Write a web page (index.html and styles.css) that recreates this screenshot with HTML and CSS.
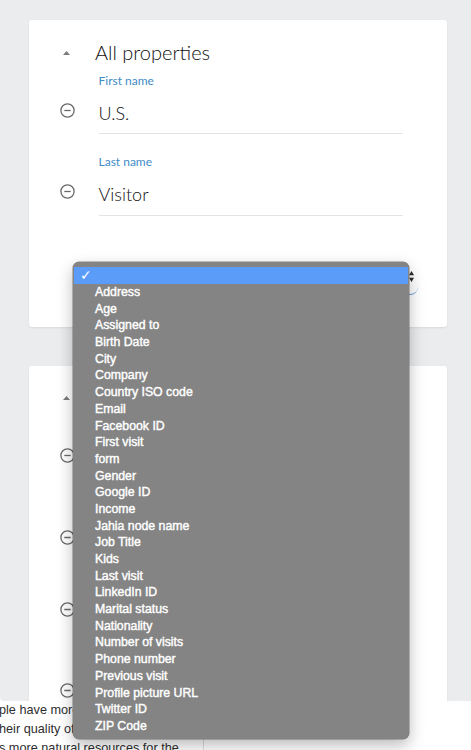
FILE: index.html
```html
<!DOCTYPE html>
<html>
<head>
<meta charset="utf-8">
<title>Profile properties</title>
<link rel="stylesheet" href="styles.css">
</head>
<body>
<div class="app">
  <section class="card card-first">
    <div class="card-head">
      <svg class="caret" viewBox="0 0 7 4"><path d="M0 4 L3.5 0 L7 4 Z"/></svg>
      <h2 class="card-title">All properties</h2>
    </div>
    <div class="field">
      <div class="field-label">First name</div>
      <svg class="remove" viewBox="0 0 15 15"><circle cx="7.5" cy="7.5" r="6.6"/><line x1="4.3" y1="7.5" x2="10.7" y2="7.5"/></svg>
      <div class="field-value">U.S.</div>
    </div>
    <div class="field">
      <div class="field-label">Last name</div>
      <svg class="remove" viewBox="0 0 15 15"><circle cx="7.5" cy="7.5" r="6.6"/><line x1="4.3" y1="7.5" x2="10.7" y2="7.5"/></svg>
      <div class="field-value">Visitor</div>
    </div>
    <div class="select">
      <svg class="stepper" viewBox="0 0 5 11"><path d="M0 4.2 L2.5 0 L5 4.2 Z M0 6.8 L2.5 11 L5 6.8 Z"/></svg>
    </div>
  </section>

  <section class="card card-second">
    <div class="card-head">
      <svg class="caret" viewBox="0 0 7 4"><path d="M0 4 L3.5 0 L7 4 Z"/></svg>
      <h2 class="card-title"></h2>
    </div>
    <div class="field">
      <div class="field-label"></div>
      <svg class="remove" viewBox="0 0 15 15"><circle cx="7.5" cy="7.5" r="6.6"/><line x1="4.3" y1="7.5" x2="10.7" y2="7.5"/></svg>
      <div class="field-value"></div>
    </div>
    <div class="field">
      <div class="field-label"></div>
      <svg class="remove" viewBox="0 0 15 15"><circle cx="7.5" cy="7.5" r="6.6"/><line x1="4.3" y1="7.5" x2="10.7" y2="7.5"/></svg>
      <div class="field-value"></div>
    </div>
    <div class="field field-compact">
      <div class="field-label"></div>
      <svg class="remove" viewBox="0 0 15 15"><circle cx="7.5" cy="7.5" r="6.6"/><line x1="4.3" y1="7.5" x2="10.7" y2="7.5"/></svg>
      <div class="field-value"></div>
    </div>
    <div class="field">
      <div class="field-label"></div>
      <svg class="remove" viewBox="0 0 15 15"><circle cx="7.5" cy="7.5" r="6.6"/><line x1="4.3" y1="7.5" x2="10.7" y2="7.5"/></svg>
      <div class="field-value"></div>
    </div>
  </section>
</div>

<div class="below">
  <div class="text-col">
    <p class="para">ple have more<br>heir quality of<br>s more natural resources for the</p>
  </div>
  <div class="rest"></div>
</div>

<div class="popup">
  <div class="opt selected"><span class="check">✓</span></div>
  <div class="opt">Address</div>
  <div class="opt">Age</div>
  <div class="opt">Assigned to</div>
  <div class="opt">Birth Date</div>
  <div class="opt">City</div>
  <div class="opt">Company</div>
  <div class="opt">Country ISO code</div>
  <div class="opt">Email</div>
  <div class="opt">Facebook ID</div>
  <div class="opt">First visit</div>
  <div class="opt">form</div>
  <div class="opt">Gender</div>
  <div class="opt">Google ID</div>
  <div class="opt">Income</div>
  <div class="opt">Jahia node name</div>
  <div class="opt">Job Title</div>
  <div class="opt">Kids</div>
  <div class="opt">Last visit</div>
  <div class="opt">LinkedIn ID</div>
  <div class="opt">Marital status</div>
  <div class="opt">Nationality</div>
  <div class="opt">Number of visits</div>
  <div class="opt">Phone number</div>
  <div class="opt">Previous visit</div>
  <div class="opt">Profile picture URL</div>
  <div class="opt">Twitter ID</div>
  <div class="opt">ZIP Code</div>
</div>
</body>
</html>
```

FILE: styles.css
```css
html, body {
  margin: 0;
  padding: 0;
}

body {
  background: #ffffff;
  font-family: "Lato", "Noto Sans", sans-serif;
  width: 471px;
  height: 750px;
  overflow: hidden;
  position: relative;
}

.app {
  height: 701px;
  box-sizing: border-box;
  background: #ebecee;
  padding: 20px 24px 0 29px;
  overflow: hidden;
  border-bottom-left-radius: 4px;
}

.card {
  background: #ffffff;
  border-radius: 3px;
  box-shadow: 0 1px 2px rgba(0, 0, 0, 0.08);
  padding: 20px 44px 31.5px 31px;
  box-sizing: border-box;
}

.card + .card {
  margin-top: 39px;
}

.card-second {
  min-height: 420px;
}

.card-head {
  display: flex;
  align-items: center;
  height: 24px;
}

.caret {
  width: 7px;
  height: 4px;
  fill: #7b7b7b;
  margin-left: 3px;
  margin-top: 1px;
}

.card-title {
  margin: 0 0 0 25px;
  font-size: 20px;
  font-weight: 300;
  line-height: 24px;
  color: #111111;
}

.field {
  display: grid;
  grid-template-columns: 15px 1fr;
  column-gap: 23.5px;
  margin-top: 8.5px;
}

.field + .field {
  margin-top: 20px;
}

.field + .field-compact {
  margin-top: 10.5px;
}

.field-label {
  grid-column: 2;
  grid-row: 1;
  height: 16px;
  font-size: 12px;
  line-height: 16px;
  color: #3f8bc6;
}

.remove {
  grid-column: 1;
  grid-row: 2;
  align-self: start;
  width: 15px;
  height: 15px;
  margin-top: 14px;
  fill: none;
  stroke: #6a6a6a;
  stroke-width: 1.3;
}

.field-value {
  grid-column: 2;
  grid-row: 2;
  margin-top: 12px;
  height: 24px;
  font-size: 18px;
  font-weight: 300;
  line-height: 24px;
  color: #111111;
  padding-bottom: 8.5px;
  border-bottom: 1px solid #e3e3e3;
}

.select {
  margin: 46.5px -15px 0 13px;
  height: 33px;
  border-bottom: 1.5px solid #6a9fd8;
  border-bottom-right-radius: 8px;
  display: flex;
  justify-content: flex-end;
  align-items: flex-start;
  padding: 9px 4px 0 0;
  box-sizing: border-box;
}

.stepper {
  width: 5px;
  height: 11px;
  fill: #2b2b2b;
}

.below {
  display: flex;
  height: 49px;
}

.text-col {
  width: 203px;
  border-right: 1px solid #dedede;
  overflow: hidden;
}

.para {
  margin: 0 0 0 -1px;
  font-family: "Liberation Sans", Arial, sans-serif;
  font-size: 12.7px;
  line-height: 19px;
  color: #2e2e2e;
  white-space: nowrap;
}

.rest {
  flex: 1;
}

.popup {
  position: absolute;
  left: 73px;
  top: 262px;
  width: 336px;
  height: 477px;
  box-sizing: border-box;
  padding: 5px 1px 0;
  background: #848484;
  border-radius: 6px;
  box-shadow: 0 0 0 0.5px rgba(60, 60, 60, 0.6), 0 6px 16px rgba(0, 0, 0, 0.28);
  font-family: "Liberation Sans", Arial, sans-serif;
  font-size: 12.3px;
  color: #ffffff;
  -webkit-text-stroke: 0.4px #ffffff;
}

.opt {
  height: 16.7px;
  line-height: 16.7px;
  padding-left: 21px;
  white-space: nowrap;
}

.opt.selected {
  position: relative;
  height: 17px;
  line-height: 17px;
  background: #5a9cf8;
}

.check {
  position: absolute;
  left: 6px;
  top: 0;
  font-size: 14px;
  -webkit-text-stroke: 0;
}
```
